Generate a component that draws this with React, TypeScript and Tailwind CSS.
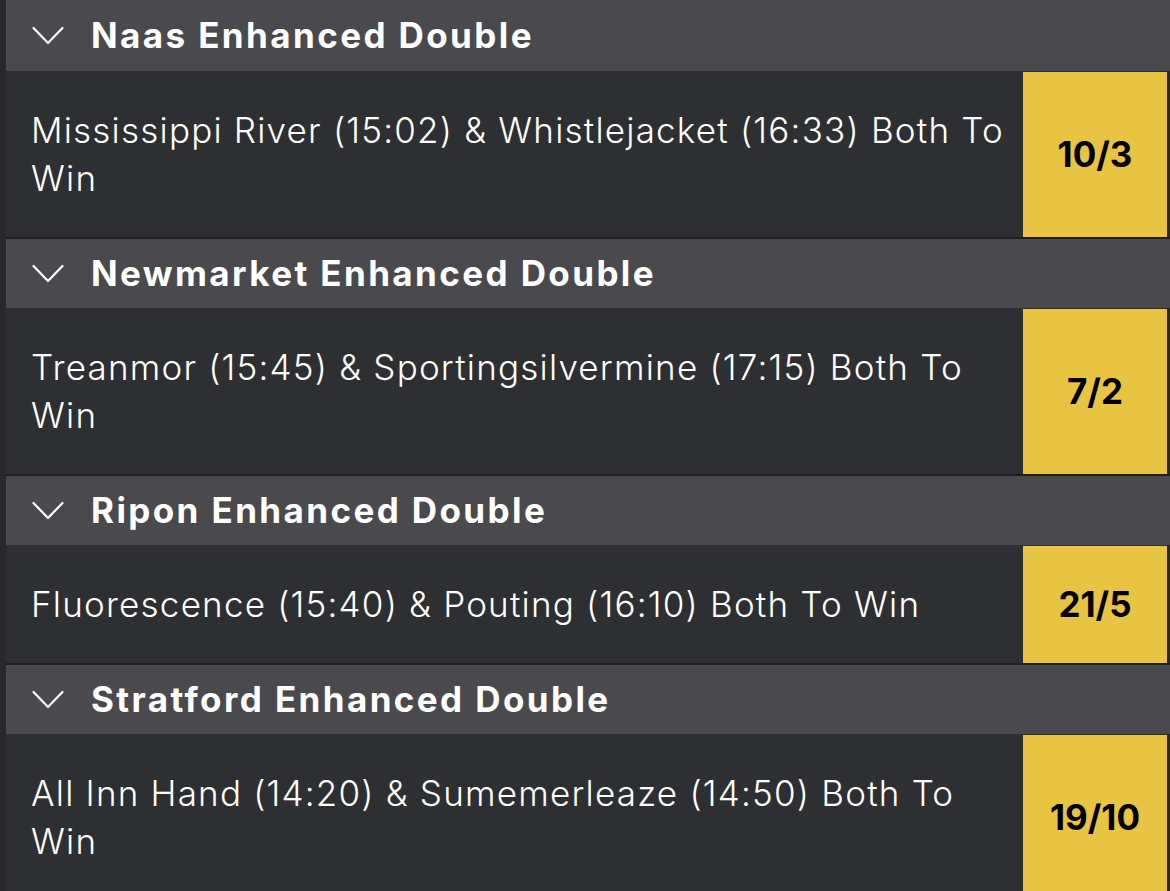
import React from "react";

type Item = { title: string; text: string; odds: string };

const items: Item[] = [
  { title: "Naas Enhanced Double", text: "Mississippi River (15:02) & Whistlejacket (16:33) Both To Win", odds: "10/3" },
  { title: "Newmarket Enhanced Double", text: "Treanmor (15:45) & Sportingsilvermine (17:15) Both To Win", odds: "7/2" },
  { title: "Ripon Enhanced Double", text: "Fluorescence (15:40) & Pouting (16:10) Both To Win", odds: "21/5" },
  { title: "Stratford Enhanced Double", text: "All Inn Hand (14:20) & Sumemerleaze (14:50) Both To Win", odds: "19/10" },
];

function Chevron() {
  return (
    <svg width="32" height="19" viewBox="0 0 32 19" fill="none" className="shrink-0">
      <polyline points="1.5,2 16,17 30.5,2" stroke="#ffffff" strokeWidth="2.2" strokeLinecap="round" strokeLinejoin="round" />
    </svg>
  );
}

export default function App() {
  return (
    <div className="min-h-screen bg-[#28282c] pl-[6px]" style={{ fontFamily: "Inter, 'Liberation Sans', sans-serif" }}>
      {items.map((it, i) => (
        <div key={it.title}>
          <div className={`flex items-center bg-[#4a494e] pl-[26px] ${i === 0 ? "h-[71px]" : "h-[69px]"}`}>
            <Chevron />
            <span className="ml-[27px] text-[35px] font-bold tracking-[2.4px] text-white leading-none">{it.title}</span>
          </div>
          <div className="flex border-r-[3px] border-[#29292d] bg-[#2e2f33]">
            <div className="flex-1 py-[35px] pl-[25px] pr-[10px] text-[35px] font-light leading-[48px] tracking-[1.2px] text-white">
              {it.text}
            </div>
            <div className="mt-[1px] flex w-[144px] shrink-0 items-center justify-center bg-[#e8c442] text-[35px] font-bold text-black">
              {it.odds}
            </div>
          </div>
          <div className="h-[2px] bg-[#1f1f22]" />
        </div>
      ))}
    </div>
  );
}
